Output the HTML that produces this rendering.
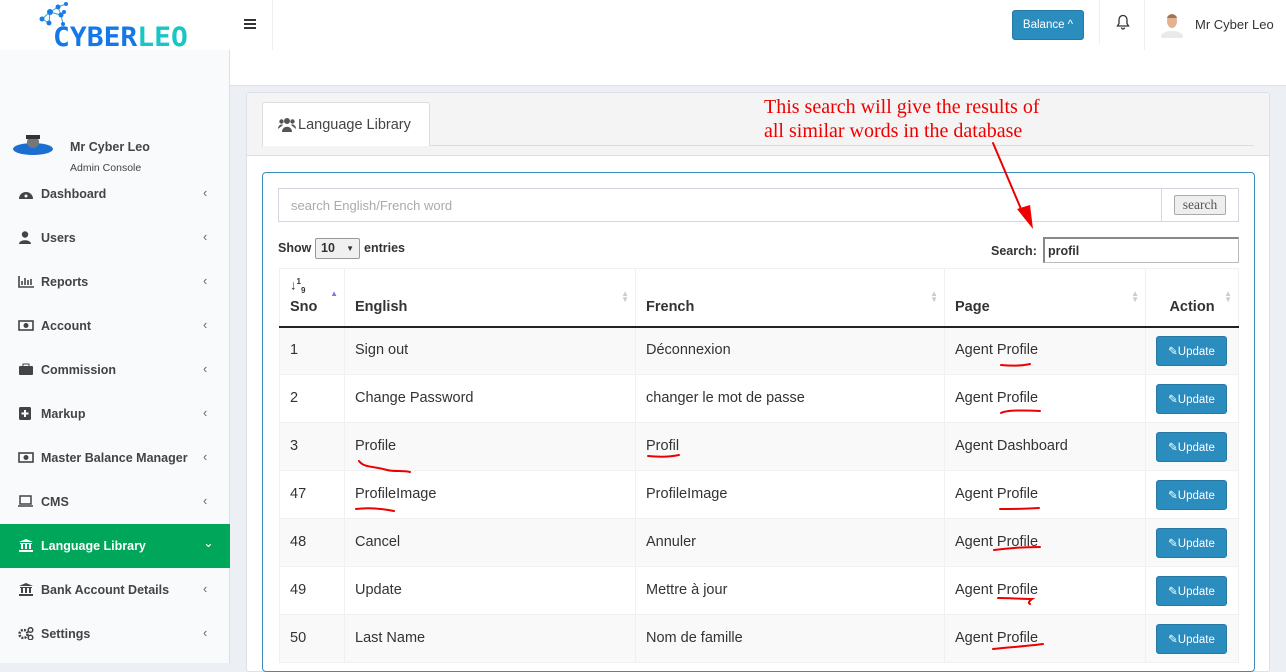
<!DOCTYPE html>
<html><head><meta charset="utf-8">
<style>
*{box-sizing:border-box;margin:0;padding:0}
body{width:1286px;height:663px;overflow:hidden;background:#ecf0f5;font-family:"Liberation Sans",sans-serif;color:#333;position:relative}
.abs{position:absolute}
.side{left:0;top:0;width:230px;height:663px;background:#f9fafc;border-right:1px solid #dde1e6}
.logo{left:0;top:0;width:230px;height:50px;background:#fff;overflow:hidden}
.top{left:230px;top:0;width:1056px;height:86px;background:#fff;border-bottom:1px solid #dde1e6}
.nav{position:absolute;left:0;width:230px;height:44px;font-size:12.5px;font-weight:bold;color:#444;display:flex;align-items:center}
.nav .ic{position:absolute;left:18px;width:16px;height:13px;top:15px}
.nav .tx{position:absolute;left:41px;top:15px}
.nav .ch{position:absolute;left:203px;top:13px;font-size:13px;font-weight:normal;color:#666}
table{border-collapse:collapse;font-size:14.5px;table-layout:fixed}
td,th{border:1px solid #f0f0f0;padding:0 10px;text-align:left}
th{height:58px;vertical-align:bottom;padding-bottom:11px;font-size:14.5px;position:relative;border-bottom:2px solid #222}
td{height:48px;padding-bottom:2px}
tr.o td{background:#f9f9f9}
.srt{position:absolute;right:6px;top:22px;font-size:8px;color:#ccc;line-height:6px}
.btn{display:inline-block;background:#2b8cbe;color:#fff;font-size:11.5px;border-radius:3px;width:71px;height:30px;line-height:30px;text-align:center;border:1px solid #2679a6;margin-top:2px}
</style></head><body>
<div class="abs side"></div>
<div class="abs logo">
<svg class="abs" style="left:38px;top:2px" width="40" height="24" viewBox="0 0 40 24"><g stroke="#2ac" stroke-width="1"><line x1="4" y1="17" x2="12" y2="10"/><line x1="12" y1="10" x2="20" y2="5"/><line x1="20" y1="5" x2="28" y2="2"/><line x1="12" y1="10" x2="23" y2="13"/><line x1="23" y1="13" x2="26" y2="10"/><line x1="20" y1="5" x2="23" y2="13"/><line x1="4" y1="17" x2="11" y2="21"/><line x1="11" y1="21" x2="12" y2="10"/><line x1="23" y1="13" x2="25" y2="22"/></g><g fill="#1a7ae8"><circle cx="4" cy="17" r="2.5"/><circle cx="12" cy="10" r="3"/><circle cx="20" cy="5" r="2.5"/><circle cx="28" cy="2" r="2"/><circle cx="23" cy="13" r="2.5"/><circle cx="26" cy="10" r="2"/><circle cx="11" cy="21" r="2.5"/><circle cx="25" cy="22" r="2"/></g></svg>
<div class="abs" style="left:53px;top:24px;font-size:28px;font-weight:bold;line-height:28px;font-family:'DejaVu Sans Mono','Liberation Mono',monospace;transform:scaleY(0.95);transform-origin:top left"><span style="color:#1478e8">CYBER</span><span style="color:#19c6c6">LEO</span></div>
</div>
<div class="abs top">
<div class="abs" style="left:14px;top:19px;width:12px;height:10px;border-top:2px solid #333;border-bottom:2px solid #333"><div style="margin-top:2px;border-top:2px solid #333"></div></div>
<div class="abs" style="left:42px;top:0;height:50px;border-left:1px solid #eee"></div>
<div class="abs" style="left:782px;top:10px;width:72px;height:30px;background:#2b8cbe;border:1px solid #2679a6;border-radius:3px;color:#fff;font-size:11.5px;text-align:center;line-height:28px">Balance ^</div>
<div class="abs" style="left:869px;top:0;height:44px;border-left:1px solid #eee"></div>
<svg class="abs" style="left:886px;top:14px" width="14" height="16" viewBox="0 0 14 16"><path d="M7 1.5c-2.5 0-4 2-4 4.5v3.5L1.5 12h11L11 9.5V6C11 3.5 9.5 1.5 7 1.5zM5.5 13.5a1.5 1.5 0 003 0" fill="none" stroke="#333" stroke-width="1.3"/></svg>
<div class="abs" style="left:914px;top:0;height:50px;border-left:1px solid #eee"></div>
<svg class="abs" style="left:929px;top:12px" width="26" height="26" viewBox="0 0 26 26"><ellipse cx="13" cy="24" rx="11" ry="5" fill="#e9e9e9"/><ellipse cx="13" cy="9" rx="5" ry="7" fill="#e2b38e"/><path d="M8 6c1-5 9-5 10 0" fill="#9c7556"/></svg>
<div class="abs" style="left:965px;top:17px;font-size:13px;color:#333">Mr Cyber Leo</div>
</div>
<svg class="abs" style="left:12px;top:133px" width="42" height="24" viewBox="0 0 42 24"><ellipse cx="21" cy="16" rx="20" ry="6" fill="#1b6fd0"/><circle cx="21" cy="9" r="6" fill="#777"/><rect x="14" y="2" width="14" height="4" fill="#333"/></svg>
<div class="abs" style="left:70px;top:140px;font-size:12.5px;font-weight:bold;color:#444">Mr Cyber Leo</div>
<div class="abs" style="left:70px;top:162px;font-size:10.5px;color:#444">Admin Console</div>
<div class="nav" style="top:172px"><svg class="ic" viewBox="0 0 16 13"><path d="M1 12a7 7 0 0114 0z" fill="#444"/><circle cx="8" cy="9" r="1.5" fill="#f9fafc"/></svg><span class="tx">Dashboard</span><span class="ch">‹</span></div>
<div class="nav" style="top:216px"><svg class="ic" viewBox="0 0 16 13"><circle cx="7" cy="3.5" r="3.2" fill="#444"/><path d="M1 13c0-5 12-5 12 0z" fill="#444"/></svg><span class="tx">Users</span><span class="ch">‹</span></div>
<div class="nav" style="top:260px"><svg class="ic" viewBox="0 0 16 13"><path d="M1 1v11h15M4 10V6M7 10V3M10 10V5M13 10V4" stroke="#444" stroke-width="1.6" fill="none"/></svg><span class="tx">Reports</span><span class="ch">‹</span></div>
<div class="nav" style="top:304px"><svg class="ic" viewBox="0 0 16 13"><rect x="1" y="2" width="14" height="9" fill="none" stroke="#444" stroke-width="1.6"/><circle cx="8" cy="6.5" r="2.5" fill="#444"/></svg><span class="tx">Account</span><span class="ch">‹</span></div>
<div class="nav" style="top:348px"><svg class="ic" viewBox="0 0 16 13"><rect x="1" y="3" width="14" height="9" rx="1" fill="#444"/><rect x="5" y="1" width="6" height="3" fill="none" stroke="#444"/></svg><span class="tx">Commission</span><span class="ch">‹</span></div>
<div class="nav" style="top:392px"><svg class="ic" viewBox="0 0 16 13"><rect x="1" y="0" width="12" height="13" rx="1.5" fill="#444"/><path d="M7 3v7M3.5 6.5h7" stroke="#fff" stroke-width="2"/></svg><span class="tx">Markup</span><span class="ch">‹</span></div>
<div class="nav" style="top:436px"><svg class="ic" viewBox="0 0 16 13"><rect x="1" y="2" width="14" height="9" fill="none" stroke="#444" stroke-width="1.6"/><circle cx="8" cy="6.5" r="2.5" fill="#444"/></svg><span class="tx">Master Balance Manager</span><span class="ch">‹</span></div>
<div class="nav" style="top:480px"><svg class="ic" viewBox="0 0 16 13"><rect x="2" y="1" width="11" height="8" fill="none" stroke="#444" stroke-width="1.5"/><path d="M0 11h15" stroke="#444" stroke-width="1.5"/></svg><span class="tx">CMS</span><span class="ch">‹</span></div>
<div class="nav" style="top:524px;background:#00a65a;color:#fff"><svg class="ic" viewBox="0 0 16 13"><path d="M8 0L1 3h14zM2 4h12v1H2zM3 5h2v5H3zM7 5h2v5H7zM11 5h2v5h-2zM1 11h14v2H1z" fill="#fff"/></svg><span class="tx">Language Library</span><span class="ch" style="color:#fff;top:11px">&#8964;</span></div>
<div class="nav" style="top:568px"><svg class="ic" viewBox="0 0 16 13"><path d="M8 0L1 3h14zM2 4h12v1H2zM3 5h2v5H3zM7 5h2v5H7zM11 5h2v5h-2zM1 11h14v2H1z" fill="#444"/></svg><span class="tx">Bank Account Details</span><span class="ch">‹</span></div>
<div class="nav" style="top:612px"><svg class="ic" viewBox="0 0 16 13"><circle cx="5.5" cy="7" r="4" fill="none" stroke="#444" stroke-width="2.5" stroke-dasharray="2 1.2"/><circle cx="12.5" cy="3" r="2.3" fill="none" stroke="#444" stroke-width="1.5"/><circle cx="12.5" cy="10.5" r="2.3" fill="none" stroke="#444" stroke-width="1.5"/></svg><span class="tx">Settings</span><span class="ch">‹</span></div>

<div class="abs" style="left:246px;top:92px;width:1024px;height:580px;background:#fff;border:1px solid #dde1e6;border-radius:3px"></div>
<div class="abs" style="left:247px;top:93px;width:1022px;height:63px;background:#f4f4f4;border-bottom:1px solid #ddd"></div>
<div class="abs" style="left:430px;top:145px;width:824px;border-top:1px solid #ddd"></div>
<div class="abs" style="left:262px;top:102px;width:168px;height:44px;background:#fff;border:1px solid #ddd;border-bottom:none;border-radius:3px 3px 0 0"></div>
<svg class="abs" style="left:278px;top:117px" width="18" height="15" viewBox="0 0 18 15"><circle cx="9" cy="4" r="3" fill="#555"/><circle cx="3.5" cy="4.5" r="2.2" fill="#555"/><circle cx="14.5" cy="4.5" r="2.2" fill="#555"/><path d="M4 15c0-7 10-7 10 0zM0 12c0-5 5-5 5-4M18 12c0-5-5-5-5-4" fill="#555"/></svg>
<div class="abs" style="left:298px;top:117px;font-size:14.5px;color:#444">Language Library</div>
<div class="abs" style="left:262px;top:172px;width:993px;height:500px;border:1px solid #3c8dbc;border-radius:4px"></div>
<div class="abs" style="left:278px;top:188px;width:961px;height:34px;border:1px solid #d2d6de"></div>
<div class="abs" style="left:291px;top:198px;font-size:13px;color:#aaa">search English/French word</div>
<div class="abs" style="left:1161px;top:188px;height:34px;border-left:1px solid #d2d6de"></div>
<div class="abs" style="left:1174px;top:195px;width:52px;height:20px;border:1px solid #aaa;background:#eee;border-radius:2px;font-family:'Liberation Serif',serif;font-size:13.5px;color:#555;text-align:center;line-height:18px">search</div>
<div class="abs" style="left:278px;top:241px;font-size:12.5px;font-weight:bold">Show</div>
<div class="abs" style="left:315px;top:238px;width:45px;height:21px;border:1px solid #999;background:#f0f0f0;border-radius:2px;font-size:12.5px;font-weight:bold;padding:2px 5px">10 <span style="font-size:8px;position:absolute;right:5px;top:5px">▼</span></div>
<div class="abs" style="left:364px;top:241px;font-size:12.5px;font-weight:bold">entries</div>
<div class="abs" style="left:991px;top:244px;font-size:12.5px;font-weight:bold">Search:</div>
<div class="abs" style="left:1043px;top:237px;width:196px;height:26px;border:1px solid #bbb;border-top:2px solid #888;border-left:2px solid #888;font-size:12.5px;font-weight:bold;padding:5px 3px">profil</div>

<table class="abs" style="left:279px;top:268px;width:959px">
<colgroup><col style="width:65px"><col style="width:291px"><col style="width:309px"><col style="width:201px"><col style="width:93px"></colgroup>
<tr><th><div style="font-size:13px;line-height:12px;margin-bottom:2px">↓<sup style="font-size:8px">1</sup><sub style="font-size:8px">9</sub></div>Sno<span class="srt" style="color:#7b7bd8;top:22px">▲</span></th><th>English<span class="srt">▲<br>▼</span></th><th>French<span class="srt">▲<br>▼</span></th><th>Page<span class="srt">▲<br>▼</span></th><th style="text-align:center">Action<span class="srt">▲<br>▼</span></th></tr>
<tr class="o"><td>1</td><td>Sign out</td><td>Déconnexion</td><td>Agent Profile</td><td><span class="btn">✎Update</span></td></tr>
<tr><td>2</td><td>Change Password</td><td>changer le mot de passe</td><td>Agent Profile</td><td><span class="btn">✎Update</span></td></tr>
<tr class="o"><td>3</td><td>Profile</td><td>Profil</td><td>Agent Dashboard</td><td><span class="btn">✎Update</span></td></tr>
<tr><td>47</td><td>ProfileImage</td><td>ProfileImage</td><td>Agent Profile</td><td><span class="btn">✎Update</span></td></tr>
<tr class="o"><td>48</td><td>Cancel</td><td>Annuler</td><td>Agent Profile</td><td><span class="btn">✎Update</span></td></tr>
<tr><td>49</td><td>Update</td><td>Mettre à jour</td><td>Agent Profile</td><td><span class="btn">✎Update</span></td></tr>
<tr class="o"><td>50</td><td>Last Name</td><td>Nom de famille</td><td>Agent Profile</td><td><span class="btn">✎Update</span></td></tr>
</table>

<div class="abs" style="left:764px;top:95px;font-family:'Liberation Serif',serif;font-size:20px;color:#e00;line-height:24px">This search will give the results of<br>all similar words in the database</div>
<svg class="abs" style="left:0;top:0" width="1286" height="663" viewBox="0 0 1286 663">
<g stroke="#e00" stroke-width="2" fill="none" stroke-linecap="round">
<path d="M993 143L1024 216"/>
<path d="M1001 365c10 1 20 1 29-1"/><path d="M1001 413c5-3 20-3 39-2"/>
<path d="M359 461c5 7 15 5 28 9c8 2 15 0 23 2"/><path d="M648 456c10 1 22 1 31-1"/>
<path d="M356 509c15-2 28 0 38 2"/><path d="M1000 509c10 0 26 0 39-1"/>
<path d="M994 550c15-2 30-3 46-3"/><path d="M998 598c10 0 24 1 34 1c-3 2-4 4-2 5"/>
<path d="M993 649c20-2 35-3 50-5"/>
</g>
<path d="M1033 229L1017 209L1030 205Z" fill="#e00"/>
</svg>
</body></html>
